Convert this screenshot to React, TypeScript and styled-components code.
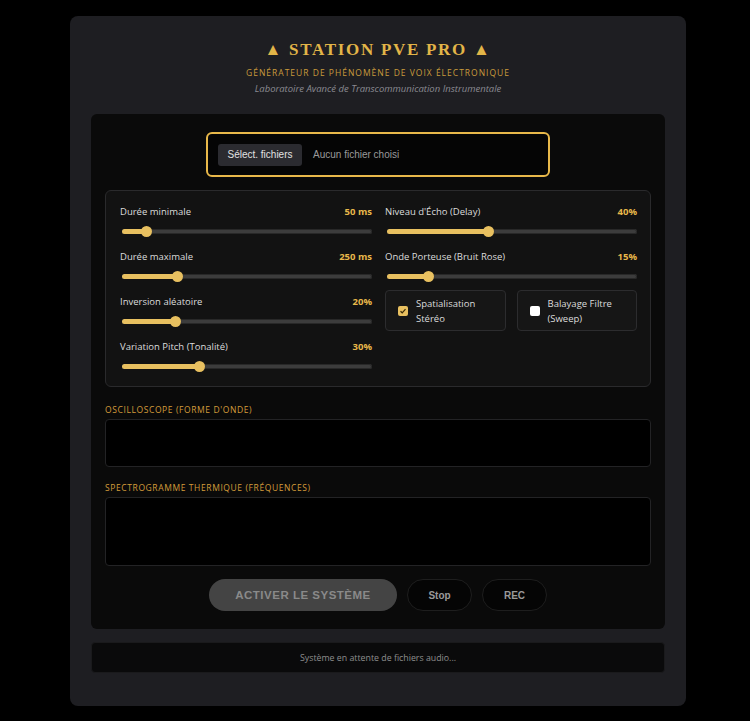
import React from "react";
import styled, { createGlobalStyle } from "styled-components";

const Global = createGlobalStyle`
  html, body { margin: 0; padding: 0; background: #000; }
  body { font-family: "Open Sans", "Noto Sans", sans-serif; color: #ddd; }
  * { box-sizing: border-box; }
`;

const Page = styled.div`
  padding: 16px 0 15px 70px;
`;

const Card = styled.div`
  width: 616px;
  background: #1e1e22;
  border-radius: 8px;
  padding: 22px 21px 33px;
`;

const Header = styled.header`
  display: flex;
  flex-direction: column;
  align-items: center;
  margin-bottom: 19px;
`;

const Title = styled.h1`
  margin: 0;
  font-family: "Liberation Serif", "Times New Roman", serif;
  font-weight: 700;
  font-size: 17px;
  letter-spacing: 1.7px;
  color: #e2b548;
  line-height: 24px;
`;

const Subtitle = styled.div`
  margin-top: 5px;
  font-size: 8.5px;
  letter-spacing: 1px;
  color: #c99b3c;
  text-transform: uppercase;
  line-height: 12px;
`;

const Tagline = styled.div`
  margin-top: 3px;
  font-size: 9.5px;
  font-style: italic;
  color: #8b8b92;
  line-height: 13px;
`;

const Panel = styled.main`
  background: #0a0a0a;
  border-radius: 6px;
  padding: 18px 14px 18px;
  display: flex;
  flex-direction: column;
`;

const FileBox = styled.label`
  align-self: center;
  width: 344px;
  height: 45px;
  border: 2px solid #e8b84a;
  border-radius: 6px;
  background: #050505;
  display: flex;
  align-items: center;
  padding: 0 10px;
  gap: 11px;
  font-family: "Liberation Sans", Arial, sans-serif;
  font-size: 10px;
  cursor: pointer;
  input { display: none; }
`;

const FileButton = styled.span`
  background: #2b2b30;
  color: #e2e2e2;
  border-radius: 3px;
  width: 84px;
  justify-content: center;
  height: 22px;
  display: inline-flex;
  align-items: center;
`;

const FileName = styled.span`
  color: #9a9a9a;
`;

const Settings = styled.section`
  margin-top: 13px;
  background: #121212;
  border: 1px solid #2a2a2c;
  border-radius: 6px;
  padding: 14px 13px 13px 14px;
  display: grid;
  grid-template-columns: 1fr 1fr;
  column-gap: 13px;
  align-items: start;
`;

const Column = styled.div`
  display: flex;
  flex-direction: column;
  gap: 12px;
`;

const Control = styled.div`
  display: flex;
  flex-direction: column;
  gap: 7px;
`;

const LabelRow = styled.div`
  display: flex;
  justify-content: space-between;
  align-items: baseline;
  font-size: 9.5px;
  line-height: 13px;
  color: #dcdcdc;
`;

const Value = styled.span`
  font-weight: 700;
  color: #e8b84a;
`;

const Track = styled.div`
  position: relative;
  margin-left: 2px;
  height: 5px;
  border-radius: 3px;
  background: #3c3c3c;
  box-shadow: inset 0 0 0 1px #282828;
  margin-top: 4px;
  margin-bottom: 4px;
`;

const Fill = styled.div`
  height: 100%;
  border-radius: 3px;
  background: #e8c060;
`;

const Thumb = styled.div`
  position: absolute;
  top: 50%;
  width: 11px;
  height: 11px;
  margin-left: -5.5px;
  margin-top: -5.5px;
  border-radius: 50%;
  background: #e8c060;
`;

const Toggles = styled.div`
  display: grid;
  grid-template-columns: 1fr 1fr;
  gap: 11px;
  margin-top: -5px;
`;

const Toggle = styled.label`
  height: 41px;
  background: #161616;
  border: 1px solid #2c2c2e;
  border-radius: 4px;
  display: flex;
  align-items: center;
  gap: 8px;
  padding: 0 12px;
  font-size: 9.5px;
  line-height: 15px;
  color: #dcdcdc;
`;

const Box = styled.span<{ $on: boolean }>`
  flex: none;
  width: 10px;
  height: 10px;
  border-radius: 2px;
  background: ${(p) => (p.$on ? "#e8c060" : "#ffffff")};
  display: flex;
  align-items: center;
  justify-content: center;
`;

const SectionLabel = styled.div<{ $gap: number }>`
  margin-top: ${(p) => p.$gap}px;
  font-size: 8.5px;
  letter-spacing: 0.6px;
  color: #d49c3a;
  text-transform: uppercase;
  line-height: 12px;
`;

const Scope = styled.div<{ $h: number }>`
  margin-top: 3px;
  height: ${(p) => p.$h}px;
  background: #000;
  border: 1px solid #232325;
  border-radius: 4px;
`;

const Actions = styled.div`
  margin-top: 13px;
  display: flex;
  justify-content: center;
  gap: 10px;
`;

const Primary = styled.button`
  width: 188px;
  height: 32px;
  border-radius: 16px;
  border: none;
  background: #444444;
  color: #8a8a8a;
  font-family: "Liberation Sans", Arial, sans-serif;
  font-weight: 700;
  font-size: 11.5px;
  letter-spacing: 0.5px;
`;

const Ghost = styled.button`
  width: 65px;
  height: 32px;
  border-radius: 16px;
  border: 1px solid #1e1e1e;
  background: #050505;
  color: #9a9a9a;
  font-family: "Liberation Sans", Arial, sans-serif;
  font-weight: 700;
  font-size: 10px;
`;

const Status = styled.footer`
  margin-top: 13px;
  height: 31px;
  background: #0a0a0b;
  border: 1px solid #1a1a1c;
  border-radius: 4px;
  display: flex;
  align-items: center;
  justify-content: center;
  font-size: 8.8px;
  color: #8e8e8e;
`;

type Slider = { label: string; value: string; pct: number };

const left: Slider[] = [
  { label: "Durée minimale", value: "50 ms", pct: 0.08 },
  { label: "Durée maximale", value: "250 ms", pct: 0.21 },
  { label: "Inversion aléatoire", value: "20%", pct: 0.2 },
  { label: "Variation Pitch (Tonalité)", value: "30%", pct: 0.3 },
];

const right: Slider[] = [
  { label: "Niveau d'Écho (Delay)", value: "40%", pct: 0.4 },
  { label: "Onde Porteuse (Bruit Rose)", value: "15%", pct: 0.15 },
];

function Range({ s }: { s: Slider }) {
  // thumb travels between the two rounded ends of the track
  const pos = `calc(5.5px + (100% - 11px) * ${s.pct})`;
  return (
    <Control>
      <LabelRow>
        <span>{s.label}</span>
        <Value>{s.value}</Value>
      </LabelRow>
      <Track role="slider" aria-label={s.label} aria-valuetext={s.value}>
        <Fill style={{ width: pos }} />
        <Thumb style={{ left: pos }} />
      </Track>
    </Control>
  );
}

function Check({ on, children }: { on: boolean; children: React.ReactNode }) {
  return (
    <Toggle>
      <Box $on={on}>
        {on && (
          <svg width="8" height="8" viewBox="0 0 8 8">
            <path d="M1.5 4.2 L3.2 5.8 L6.5 2.2" fill="none" stroke="#3a2a08" strokeWidth="1.2" />
          </svg>
        )}
      </Box>
      <span>{children}</span>
    </Toggle>
  );
}

export default function App() {
  return (
    <>
      <Global />
      <Page>
        <Card>
          <Header>
            <Title>▲ STATION PVE PRO ▲</Title>
            <Subtitle>Générateur de Phénomène de Voix Électronique</Subtitle>
            <Tagline>Laboratoire Avancé de Transcommunication Instrumentale</Tagline>
          </Header>
          <Panel>
            <FileBox>
              <input type="file" multiple accept="audio/*" />
              <FileButton>Sélect. fichiers</FileButton>
              <FileName>Aucun fichier choisi</FileName>
            </FileBox>
            <Settings>
              <Column>
                {left.map((s) => (
                  <Range key={s.label} s={s} />
                ))}
              </Column>
              <Column>
                {right.map((s) => (
                  <Range key={s.label} s={s} />
                ))}
                <Toggles>
                  <Check on>
                    Spatialisation
                    <br />
                    Stéréo
                  </Check>
                  <Check on={false}>
                    Balayage Filtre
                    <br />
                    (Sweep)
                  </Check>
                </Toggles>
              </Column>
            </Settings>
            <SectionLabel $gap={17}>Oscilloscope (Forme d'onde)</SectionLabel>
            <Scope $h={48} />
            <SectionLabel $gap={15}>Spectrogramme thermique (Fréquences)</SectionLabel>
            <Scope $h={69} />
            <Actions>
              <Primary>ACTIVER LE SYSTÈME</Primary>
              <Ghost>Stop</Ghost>
              <Ghost>REC</Ghost>
            </Actions>
          </Panel>
          <Status>Système en attente de fichiers audio...</Status>
        </Card>
      </Page>
    </>
  );
}
